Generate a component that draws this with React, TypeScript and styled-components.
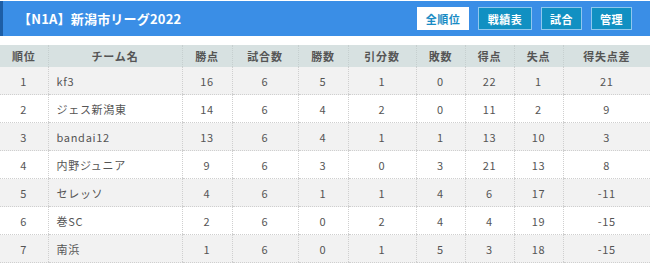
import React from "react";
import styled, { createGlobalStyle } from "styled-components";

const Global = createGlobalStyle`
  html, body { margin: 0; padding: 0; background: #fff; }
  body { font-family: "Noto Sans CJK JP", "Noto Sans", sans-serif; }
`;

const Page = styled.div`
  width: 650px;
  padding-top: 1px;
`;

const TitleBar = styled.div`
  display: flex;
  align-items: center;
  justify-content: space-between;
  height: 35px;
  background: #3a8ee6;
  border-left: 3px solid #1d5ea6;
  padding: 0 18px 0 15px;
  box-sizing: border-box;
`;

const Title = styled.h1`
  margin: 0;
  color: #fff;
  font-size: 13px;
  font-weight: 700;
  letter-spacing: 0.2px;
`;

const Buttons = styled.div`
  display: flex;
  gap: 9px;
`;

const Btn = styled.a<{ $active?: boolean; $w: number }>`
  display: flex;
  align-items: center;
  justify-content: center;
  height: 23px;
  width: ${(p) => p.$w}px;
  box-sizing: border-box;
  font-size: 11px;
  font-weight: 700;
  letter-spacing: 0.5px;
  text-decoration: none;
  background: ${(p) => (p.$active ? "#fff" : "#1190c2")};
  color: ${(p) => (p.$active ? "#1a8cc4" : "#fff")};
  border: 1px solid ${(p) => (p.$active ? "#fff" : "#8fc7ee")};
`;

const Table = styled.table`
  margin-top: 9px;
  width: 650px;
  border-collapse: collapse;
  table-layout: fixed;
  font-size: 11px;
  color: #555;
`;

const Th = styled.th`
  height: 22px;
  padding: 0;
  background: #d7e1e1;
  font-weight: 700;
  color: #555;
  letter-spacing: 0.8px;
  border-left: 1px dotted #c6cfcf;
  &:first-child { border-left: none; }
`;

const Tr = styled.tr<{ $odd: boolean }>`
  background: ${(p) => (p.$odd ? "#f2f2f2" : "#fff")};
`;

const Td = styled.td<{ $left?: boolean }>`
  height: 27px;
  padding: 0 0 0 ${(p) => (p.$left ? "8px" : "0")};
  text-align: ${(p) => (p.$left ? "left" : "center")};
  letter-spacing: 0.7px;
  border-left: 1px dotted #cfcfcf;
  border-bottom: 1px dotted #cfcfcf;
  &:first-child { border-left: none; }
`;

const widths = [48, 134, 50, 66, 50, 68, 49, 49, 49, 87];
const heads = ["順位", "チーム名", "勝点", "試合数", "勝数", "引分数", "敗数", "得点", "失点", "得失点差"];
const rows: (string | number)[][] = [
  [1, "kf3", 16, 6, 5, 1, 0, 22, 1, 21],
  [2, "ジェス新潟東", 14, 6, 4, 2, 0, 11, 2, 9],
  [3, "bandai12", 13, 6, 4, 1, 1, 13, 10, 3],
  [4, "内野ジュニア", 9, 6, 3, 0, 3, 21, 13, 8],
  [5, "セレッソ", 4, 6, 1, 1, 4, 6, 17, -11],
  [6, "巻SC", 2, 6, 0, 2, 4, 4, 19, -15],
  [7, "南浜", 1, 6, 0, 1, 5, 3, 18, -15],
];

export default function App() {
  return (
    <Page>
      <Global />
      <TitleBar>
        <Title>【N1A】新潟市リーグ2022</Title>
        <Buttons>
          <Btn $active $w={52}>全順位</Btn>
          <Btn $w={54}>戦績表</Btn>
          <Btn $w={41}>試合</Btn>
          <Btn $w={41}>管理</Btn>
        </Buttons>
      </TitleBar>
      <Table>
        <colgroup>
          {widths.map((w, i) => (
            <col key={i} style={{ width: w }} />
          ))}
        </colgroup>
        <thead>
          <tr>
            {heads.map((h) => (
              <Th key={h}>{h}</Th>
            ))}
          </tr>
        </thead>
        <tbody>
          {rows.map((r, i) => (
            <Tr key={i} $odd={i % 2 === 0}>
              {r.map((c, j) => (
                <Td key={j} $left={j === 1}>
                  {c}
                </Td>
              ))}
            </Tr>
          ))}
        </tbody>
      </Table>
    </Page>
  );
}
